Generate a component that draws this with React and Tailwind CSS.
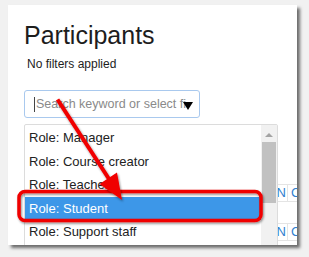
import React from "react";

const roles = [
  "Role: Manager",
  "Role: Course creator",
  "Role: Teacher",
  "Role: Student",
  "Role: Support staff",
];

export default function App() {
  return (
    <div
      className="relative w-[309px] h-[257px] overflow-hidden bg-[#f1f1f1] pt-[5px] pl-[8px]"
      style={{ fontFamily: '"Liberation Sans", Arial, sans-serif' }}
    >
      <div className="relative w-[289px] h-[240px] bg-white shadow-[3px_3px_3px_rgba(0,0,0,0.55)] overflow-hidden">
        <div className="pl-[16px] pt-[15px]">
          <h1 className="text-[25px] leading-[30px] text-[#1d1d1d] font-normal">Participants</h1>
          <p className="ml-[3px] text-[12px] leading-[16px] text-[#1d1d1d] mt-[6px]">No filters applied</p>
          <div className="mt-[18px] w-[176px] h-[28px] border border-[#a9c9ee] rounded-[3px] flex items-center pl-[9px] relative overflow-hidden">
            <span className="w-px h-[15px] bg-[#444] mr-[1px]" />
            <span className="text-[12.5px] text-[#8a8a8a] whitespace-nowrap">Search keyword or select fi</span>
            <span className="absolute left-[158px] top-[11px] w-0 h-0 border-l-[5px] border-r-[5px] border-t-[8px] border-l-transparent border-r-transparent border-t-black" />
          </div>
        </div>

        {/* table behind dropdown */}
        <div className="mt-[66px] flex flex-col gap-[21px] items-end">
          {[0, 1].map((r) => (
            <div key={r} className="flex h-[18px] border-t border-b border-[#e4e4e4] text-[13px] leading-[16px] text-[#2f80cf]">
              <div className="w-[20px] border-r border-[#e4e4e4] flex justify-end pr-[1px]">N</div>
              <div className="w-[9px] pl-[3px]">C</div>
            </div>
          ))}
        </div>

        {/* dropdown list */}
        <div className="absolute left-[16px] top-[119px] w-[254px] h-[130px] bg-white border border-[#dcdcdc] rounded-[2px] flex">
          <div className="flex-1 pt-[1px]">
            {roles.map((r) => (
              <div
                key={r}
                className={
                  "h-[23.5px] flex items-center pl-[4px] text-[13px] " +
                  (r === "Role: Student" ? "bg-[#3d97e8] text-white" : "text-[#222]")
                }
              >
                {r}
              </div>
            ))}
          </div>
          <div className="w-[16px] bg-[#f1f1f1] flex flex-col items-center">
            <div className="mt-[8px] w-0 h-0 border-l-[4px] border-r-[4px] border-b-[4px] border-l-transparent border-r-transparent border-b-[#a3a3a3]" />
            <div className="mt-[5px] w-[14px] h-[61px] bg-[#c1c1c1]" />
          </div>
        </div>
      </div>

      {/* annotations */}
      <svg className="absolute left-0 top-0" width="309" height="257" viewBox="0 0 309 257">
        <defs>
          <filter id="sh" x="-10%" y="-10%" width="130%" height="140%">
            <feDropShadow dx="1" dy="1.5" stdDeviation="1" floodColor="#000" floodOpacity="0.45" />
          </filter>
        </defs>
        <rect x="19" y="191.5" width="242" height="29" rx="6" fill="none" stroke="#f00000" strokeWidth="3.5" filter="url(#sh)" />
        <g filter="url(#sh)">
          <line x1="57.5" y1="99.5" x2="109" y2="179" stroke="#f00000" strokeWidth="4" />
          <polygon points="122,200 99.5,184 117,172.5" fill="#f00000" />
        </g>
      </svg>
    </div>
  );
}
